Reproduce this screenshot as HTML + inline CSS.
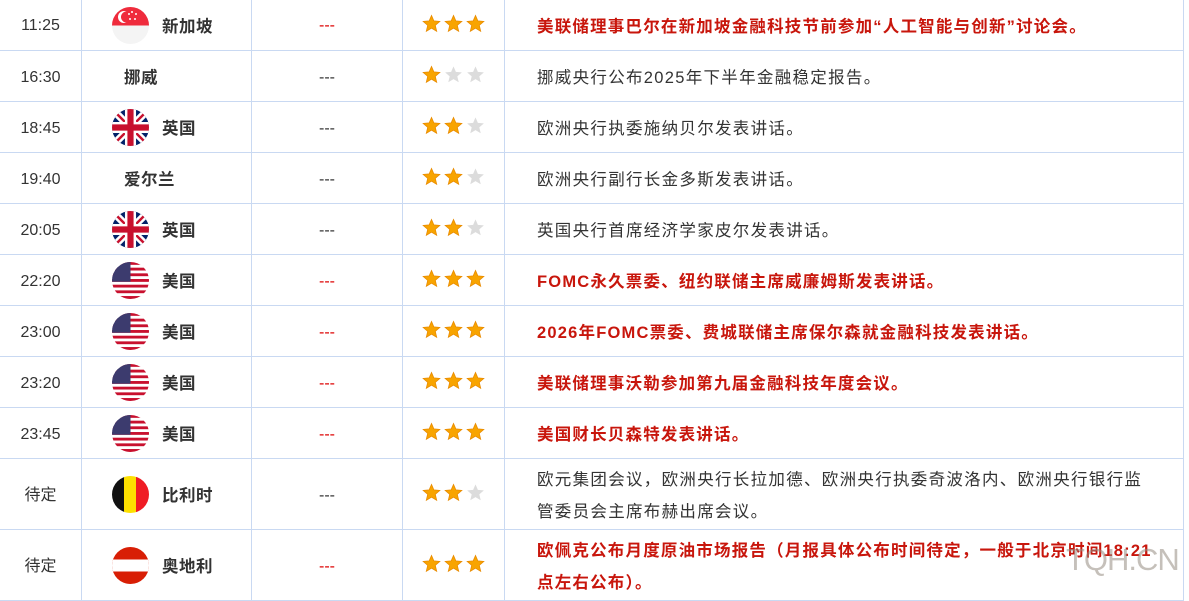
<!DOCTYPE html>
<html><head><meta charset="utf-8"><style>
*{margin:0;padding:0;box-sizing:border-box}
body{width:1189px;height:597px;overflow:hidden;background:#fff;font-family:"Liberation Sans","Noto Sans CJK SC",sans-serif;color:#333;position:relative}
.row{position:absolute;left:0;width:1184px;border-bottom:1px solid #c9d9f2}
.c{position:absolute;top:0;bottom:0;display:flex;align-items:center;font-size:16px;line-height:20px}
.t{left:0;width:82px;justify-content:center;border-right:1px solid #c9d9f2;padding-top:3px}
.n{left:82px;width:170px;border-right:1px solid #c9d9f2;font-weight:bold;padding-left:80px;padding-top:4px;font-size:16.5px;letter-spacing:.5px}
.n.nf{padding-left:42px}
.d{left:252px;width:151px;justify-content:center;border-right:1px solid #c9d9f2;color:#333;padding-top:3px}
.d.r{color:#d00}
.s{left:403px;width:102px;justify-content:center;border-right:1px solid #c9d9f2;gap:3px;padding-bottom:3px}
.s svg{display:block}
.e{left:505px;width:679px;padding-left:32px;padding-right:10px;line-height:32px;border-right:1px solid #c9d9f2;padding-top:4px;font-size:16.5px;letter-spacing:1.3px;white-space:nowrap}
.e.r{color:#c8160c;font-weight:bold;letter-spacing:1.2px}
.flag{position:absolute;left:30px;width:37px;height:37px;border-radius:50%;overflow:hidden;top:50%;margin-top:-18px}
.wm{position:absolute;left:1066px;top:542px;font-size:31px;color:rgba(150,140,130,.55);font-family:"Liberation Sans",sans-serif;letter-spacing:-1px}
</style></head><body>
<svg width="0" height="0" style="position:absolute"><defs>
<symbol id="sg" viewBox="0 0 20 20"><polygon points="10,1.5 12.5,7.3 18.8,7.8 14,12 15.5,18.2 10,14.9 4.5,18.2 6,12 1.2,7.8 7.5,7.3" fill="#f8a400" stroke="#e88a00" stroke-width=".8"/></symbol>
<symbol id="sr" viewBox="0 0 20 20"><polygon points="10,1.5 12.5,7.3 18.8,7.8 14,12 15.5,18.2 10,14.9 4.5,18.2 6,12 1.2,7.8 7.5,7.3" fill="#dcdcdc"/></symbol>
<symbol id="uk" viewBox="0 0 60 60"><rect width="60" height="60" fill="#012169"/><path d="M0,0L60,60M60,0L0,60" stroke="#fff" stroke-width="12"/><path d="M0,0L60,60M60,0L0,60" stroke="#c8102e" stroke-width="4"/><path d="M30,0V60M0,30H60" stroke="#fff" stroke-width="18"/><path d="M30,0V60M0,30H60" stroke="#c8102e" stroke-width="10"/></symbol>
<symbol id="us" viewBox="0 0 60 60"><rect width="60" height="60" fill="#fff"/><g fill="#c8102e"><rect y="0" width="60" height="4.6"/><rect y="9.2" width="60" height="4.6"/><rect y="18.4" width="60" height="4.6"/><rect y="27.6" width="60" height="4.6"/><rect y="36.8" width="60" height="4.6"/><rect y="46" width="60" height="4.6"/><rect y="55.2" width="60" height="4.8"/></g><rect width="30" height="32" fill="#3c3b6e"/></symbol>
</defs></svg>

<div class="row" style="top:-1px;height:52px"><div class="c t">11:25</div><div class="c n"><div class="flag"><svg width="37" height="37" viewBox="0 0 37 37"><rect width="37" height="37" fill="#f4f4f4"/><rect width="37" height="18.5" fill="#ef2b3c"/><circle cx="12" cy="10" r="6" fill="#fff"/><circle cx="14.5" cy="10" r="5.5" fill="#ef2b3c"/><g fill="#fff"><circle cx="20" cy="5" r="1"/><circle cx="24" cy="7" r="1"/><circle cx="23" cy="12" r="1"/><circle cx="18" cy="12" r="1"/><circle cx="17" cy="7" r="1"/></g></svg></div>新加坡</div><div class="c d r">---</div><div class="c s"><svg width="19" height="19"><use href="#sg"/></svg><svg width="19" height="19"><use href="#sg"/></svg><svg width="19" height="19"><use href="#sg"/></svg></div><div class="c e r">美联储理事巴尔在新加坡金融科技节前参加“人工智能与创新”讨论会。</div></div>

<div class="row" style="top:51px;height:51px"><div class="c t">16:30</div><div class="c n nf">挪威</div><div class="c d">---</div><div class="c s"><svg width="19" height="19"><use href="#sg"/></svg><svg width="19" height="19"><use href="#sr"/></svg><svg width="19" height="19"><use href="#sr"/></svg></div><div class="c e">挪威央行公布2025年下半年金融稳定报告。</div></div>

<div class="row" style="top:102px;height:51px"><div class="c t">18:45</div><div class="c n"><div class="flag"><svg width="37" height="37"><use href="#uk"/></svg></div>英国</div><div class="c d">---</div><div class="c s"><svg width="19" height="19"><use href="#sg"/></svg><svg width="19" height="19"><use href="#sg"/></svg><svg width="19" height="19"><use href="#sr"/></svg></div><div class="c e">欧洲央行执委施纳贝尔发表讲话。</div></div>

<div class="row" style="top:153px;height:51px"><div class="c t">19:40</div><div class="c n nf">爱尔兰</div><div class="c d">---</div><div class="c s"><svg width="19" height="19"><use href="#sg"/></svg><svg width="19" height="19"><use href="#sg"/></svg><svg width="19" height="19"><use href="#sr"/></svg></div><div class="c e">欧洲央行副行长金多斯发表讲话。</div></div>

<div class="row" style="top:204px;height:51px"><div class="c t">20:05</div><div class="c n"><div class="flag"><svg width="37" height="37"><use href="#uk"/></svg></div>英国</div><div class="c d">---</div><div class="c s"><svg width="19" height="19"><use href="#sg"/></svg><svg width="19" height="19"><use href="#sg"/></svg><svg width="19" height="19"><use href="#sr"/></svg></div><div class="c e">英国央行首席经济学家皮尔发表讲话。</div></div>

<div class="row" style="top:255px;height:51px"><div class="c t">22:20</div><div class="c n"><div class="flag"><svg width="37" height="37"><use href="#us"/></svg></div>美国</div><div class="c d r">---</div><div class="c s"><svg width="19" height="19"><use href="#sg"/></svg><svg width="19" height="19"><use href="#sg"/></svg><svg width="19" height="19"><use href="#sg"/></svg></div><div class="c e r">FOMC永久票委、纽约联储主席威廉姆斯发表讲话。</div></div>

<div class="row" style="top:306px;height:51px"><div class="c t">23:00</div><div class="c n"><div class="flag"><svg width="37" height="37"><use href="#us"/></svg></div>美国</div><div class="c d r">---</div><div class="c s"><svg width="19" height="19"><use href="#sg"/></svg><svg width="19" height="19"><use href="#sg"/></svg><svg width="19" height="19"><use href="#sg"/></svg></div><div class="c e r">2026年FOMC票委、费城联储主席保尔森就金融科技发表讲话。</div></div>

<div class="row" style="top:357px;height:51px"><div class="c t">23:20</div><div class="c n"><div class="flag"><svg width="37" height="37"><use href="#us"/></svg></div>美国</div><div class="c d r">---</div><div class="c s"><svg width="19" height="19"><use href="#sg"/></svg><svg width="19" height="19"><use href="#sg"/></svg><svg width="19" height="19"><use href="#sg"/></svg></div><div class="c e r">美联储理事沃勒参加第九届金融科技年度会议。</div></div>

<div class="row" style="top:408px;height:51px"><div class="c t">23:45</div><div class="c n"><div class="flag"><svg width="37" height="37"><use href="#us"/></svg></div>美国</div><div class="c d r">---</div><div class="c s"><svg width="19" height="19"><use href="#sg"/></svg><svg width="19" height="19"><use href="#sg"/></svg><svg width="19" height="19"><use href="#sg"/></svg></div><div class="c e r">美国财长贝森特发表讲话。</div></div>

<div class="row" style="top:459px;height:71px"><div class="c t">待定</div><div class="c n"><div class="flag"><svg width="37" height="37"><rect width="13" height="37" fill="#111"/><rect x="12" width="13" height="37" fill="#fde000"/><rect x="24" width="13" height="37" fill="#ef1c24"/></svg></div>比利时</div><div class="c d">---</div><div class="c s"><svg width="19" height="19"><use href="#sg"/></svg><svg width="19" height="19"><use href="#sg"/></svg><svg width="19" height="19"><use href="#sr"/></svg></div><div class="c e">欧元集团会议，欧洲央行长拉加德、欧洲央行执委奇波洛内、欧洲央行银行监<br>管委员会主席布赫出席会议。</div></div>

<div class="row" style="top:530px;height:71px"><div class="c t">待定</div><div class="c n"><div class="flag"><svg width="37" height="37"><rect width="37" height="37" fill="#d81e05"/><rect y="12.5" width="37" height="12" fill="#fff"/></svg></div>奥地利</div><div class="c d r">---</div><div class="c s"><svg width="19" height="19"><use href="#sg"/></svg><svg width="19" height="19"><use href="#sg"/></svg><svg width="19" height="19"><use href="#sg"/></svg></div><div class="c e r">欧佩克公布月度原油市场报告（月报具体公布时间待定，一般于北京时间18:21<br>点左右公布）。</div></div>
<div class="wm">TQH.CN</div>
</body></html>
